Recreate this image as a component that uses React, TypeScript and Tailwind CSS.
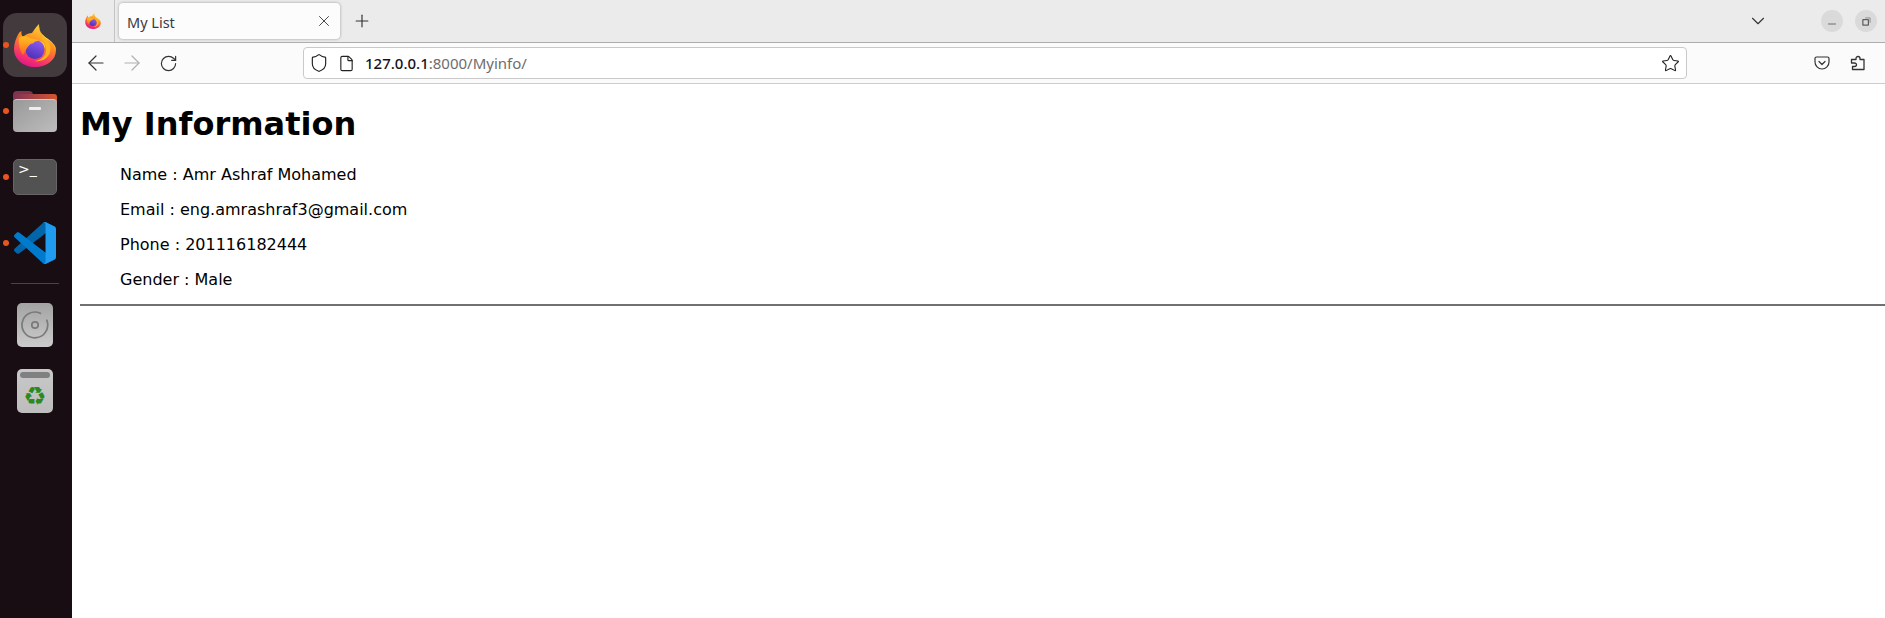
import React from 'react';
import { ArrowLeft, ArrowRight, ChevronDown, File, Minus, Plus, RotateCw, Shield, Star, X } from 'lucide-react';

function FirefoxLogo({ className, id }: { className: string; id: string }) {
  return (
    <svg viewBox="0 0 42 43" className={className}>
      <defs>
        <linearGradient id={`${id}-a`} x1="0.75" y1="0" x2="0.35" y2="1">
          <stop offset="0" stopColor="#ffe03d" />
          <stop offset="0.45" stopColor="#ff8a1f" />
          <stop offset="0.8" stopColor="#f5356b" />
          <stop offset="1" stopColor="#e31587" />
        </linearGradient>
        <linearGradient id={`${id}-b`} x1="0.7" y1="0" x2="0.3" y2="1">
          <stop offset="0" stopColor="#8f5cf0" />
          <stop offset="1" stopColor="#4a2fb5" />
        </linearGradient>
        <linearGradient id={`${id}-c`} x1="0.5" y1="0" x2="0.4" y2="1">
          <stop offset="0" stopColor="#ffc21f" />
          <stop offset="1" stopColor="#ff6a1f" />
        </linearGradient>
      </defs>
      <path
        d="M25 0C24 6 27 9 31 13C37 17 42 21 42 26C42 36 33 43 21 43C9 43 0 35 0 25C0 19 2 14 5 9C6 8 7 7 7.500 7C7 10 8 12 9 13C12 10 15 9 18 9C20 6 22 3 25 0Z"
        fill={`url(#${id}-a)`}
      />
      <path d="M25 0C24 6 27 9 31 13C37 17 42 21 42 26C41 21 37 17 32 15C29 12 25 8 25 0Z" fill="#ffe45c" />
      <path d="M27 12C34 14 38 21 36 28C34 35 27 38 21 37C28 36 33 31 32 24C31 18 28 15 24 13Z" fill="#ffb21f" />
      <circle cx="21" cy="25.500" r="9.500" fill={`url(#${id}-b)`} />
      <path
        d="M5 14C7 12 11 12 14 13C16 14 18 15 20 15C22 15 24 16 25 17C22 16.500 20 18 19 19.500C17 19 15 21 13 24C11 27 10 30 9 31C6 27 4 20 5 14Z"
        fill={`url(#${id}-c)`}
      />
      <path d="M25 17C29 17 32 21 31 25C30 20 28 18 25 17Z" fill="#ffd43b" />
    </svg>
  );
}

function VsCodeLogo() {
  return (
    <svg viewBox="0 0 100 100" className="w-[42px] h-[42px]">
      <path
        d="M96.4614 10.7962L75.8569 0.875542C73.4719 -0.272773 70.6217 0.211611 68.75 2.08333L1.29858 63.5832C-0.515693 65.2373 -0.513607 68.0937 1.30308 69.7452L6.81272 74.754C8.29793 76.1042 10.5347 76.2036 12.1338 74.9905L93.3609 13.3699C96.086 11.3026 100 13.2462 100 16.6667V16.4275C100 14.0265 98.6246 11.8378 96.4614 10.7962Z"
        fill="#0065a9"
      />
      <path
        d="M96.4614 89.2038L75.8569 99.1245C73.4719 100.273 70.6217 99.7884 68.75 97.9167L1.29858 36.4168C-0.515693 34.7627 -0.513607 31.9063 1.30308 30.2548L6.81272 25.246C8.29793 23.8958 10.5347 23.7964 12.1338 25.0095L93.3609 86.6301C96.086 88.6974 100 86.7538 100 83.3333V83.5725C100 85.9735 98.6246 88.1622 96.4614 89.2038Z"
        fill="#007acc"
      />
      <path
        d="M75.8578 99.1263C73.4721 100.274 70.6219 99.7885 68.75 97.9166C71.0564 100.223 75 98.5895 75 95.3278V4.67213C75 1.41039 71.0564 -0.223106 68.75 2.08329C70.6219 0.211402 73.4721 -0.273666 75.8578 0.873633L96.4587 10.7807C98.6234 11.8217 100 14.0112 100 16.4132V83.5871C100 85.9891 98.6234 88.1786 96.4586 89.2196L75.8578 99.1263Z"
        fill="#1f9cf0"
      />
    </svg>
  );
}

function DockItem({ running, active, children }: { running?: boolean; active?: boolean; children: React.ReactNode }) {
  return (
    <div className="relative h-[66px] w-full flex items-center justify-center">
      {running && <span className="absolute left-[3px] top-[30px] w-[6px] h-[6px] rounded-full bg-[#e95420]" />}
      <div className={`w-[64px] h-[64px] rounded-[14px] flex items-center justify-center ${active ? 'bg-[#433a3e]' : ''}`}>
        {children}
      </div>
    </div>
  );
}

function Dock() {
  return (
    <aside className="w-[72px] shrink-0 bg-[#170d13] flex flex-col items-center pt-[12px] pr-[2px]">
      <DockItem running active>
        <FirefoxLogo id="dock" className="w-[42px] h-[43px]" />
      </DockItem>
      <DockItem running>
        <div className="relative w-[44px] h-[41px]">
          <div className="absolute top-0 left-0 w-[20px] h-[8px] rounded-t-[4px] bg-[#7e3350]" />
          <div className="absolute top-[3px] left-0 right-0 h-[14px] rounded-t-[3px] bg-gradient-to-r from-[#7e3350] to-[#d5552a]" />
          <div className="absolute top-[8px] left-0 right-0 bottom-0 rounded-[4px] bg-gradient-to-br from-[#999999] to-[#bdbdbd] border-t border-[#cfcfcf]" />
          <div className="absolute top-[16px] left-[16px] w-[12px] h-[3px] rounded-[1px] bg-[#eeeeee]" />
        </div>
      </DockItem>
      <DockItem running>
        <div className="relative w-[44px] h-[36px] rounded-[5px] bg-[#525252] border border-[#666666]">
          <span className="absolute left-[4px] top-[1px] text-[14px] leading-[16px] text-white [font-family:'DejaVu_Sans',sans-serif]">&gt;_</span>
        </div>
      </DockItem>
      <DockItem running>
        <VsCodeLogo />
      </DockItem>
      <div className="w-[48px] h-px bg-[#4a4347] mt-[7px] mb-[19px]" />
      <div className="w-[36px] h-[44px] rounded-[5px] bg-gradient-to-b from-[#a3a3a3] to-[#cccccc] flex items-center justify-center">
        <svg viewBox="0 0 28 28" className="w-[30px] h-[30px]" fill="none" stroke="#7a7a7a">
          <path d="M19 3.100A12 12 0 1 0 25 9.500" strokeWidth="1.600" strokeLinecap="round" />
          <circle cx="14" cy="14" r="3" strokeWidth="1.600" />
        </svg>
      </div>
      <div className="w-[36px] h-[44px] mt-[22px] rounded-[5px] bg-gradient-to-b from-[#c8c8c8] to-[#bdbdbd] flex flex-col items-center pt-[3px]">
        <div className="w-[30px] h-[6px] rounded-[3px] bg-[#808080]" />
        <span className="mt-[5px] text-[26px] leading-[26px] font-bold text-[#2a8a1f] [font-family:'DejaVu_Sans',sans-serif]">♻</span>
      </div>
    </aside>
  );
}

function TabBar() {
  return (
    <div className="h-[43px] shrink-0 bg-[#ebebeb] border-b border-[#adadad] flex items-stretch [font-family:'Noto_Sans',sans-serif]">
      <div className="w-[43px] border-r border-[#c4c4c4] flex items-center justify-center">
        <FirefoxLogo id="tab" className="w-[16px] h-[16px]" />
      </div>
      <div className="ml-[4px] mt-[3px] w-[221px] h-[36px] rounded-[4px] bg-[#fcfcfc] shadow-[0_0_3px_rgba(0,0,0,0.35)] flex items-center justify-between pl-[8px] pr-[7px]">
        <span className="text-[14.500px] leading-[20px] mt-[1px] text-[#3a3a44]">My List</span>
        <X size={18} strokeWidth={1.3} className="text-[#444444]" />
      </div>
      <div className="ml-[5px] w-[34px] flex items-center justify-center">
        <Plus size={20} strokeWidth={1.4} className="text-[#333333]" />
      </div>
      <div className="flex-1" />
      <div className="flex items-center pr-[8px]">
        <ChevronDown size={22} strokeWidth={1.2} className="text-[#333333] mr-[52px]" />
        <div className="w-[22px] h-[22px] rounded-full bg-[#dadada] flex items-center justify-center">
          <Minus size={12} strokeWidth={1.3} className="text-[#333333] mt-[5px]" />
        </div>
        <div className="ml-[12px] w-[22px] h-[22px] rounded-full bg-[#dadada] flex items-center justify-center">
          <svg viewBox="0 0 10 10" className="w-[9px] h-[9px]" fill="none" stroke="#333333" strokeWidth="1">
            <rect x="1" y="3" width="6" height="6" />
            <path d="M3.500 1H9V6.500" stroke="#888888" />
          </svg>
        </div>
      </div>
    </div>
  );
}

function NavButton({ children }: { children: React.ReactNode }) {
  return <div className="w-[36px] h-[36px] flex items-center justify-center">{children}</div>;
}

function Toolbar() {
  return (
    <div className="h-[41px] shrink-0 bg-[#fbfbfb] border-b border-[#cccccc] flex items-center pl-[6px] pr-[9px] [font-family:'Noto_Sans',sans-serif]">
      <NavButton>
        <ArrowLeft size={24} strokeWidth={1.2} className="text-[#333333]" />
      </NavButton>
      <NavButton>
        <ArrowRight size={24} strokeWidth={1.2} className="text-[#b0b0b0]" />
      </NavButton>
      <NavButton>
        <RotateCw size={19} strokeWidth={1.5} className="text-[#333333]" />
      </NavButton>
      <div className="mx-[117px] flex-1 h-[32px] bg-white border border-[#c9c9c9] rounded-[4px] flex items-center pl-[5px] pr-[6px]">
        <Shield size={20} strokeWidth={1.4} className="text-[#222222]" />
        <File size={17} strokeWidth={1.6} className="ml-[9px] text-[#222222]" />
        <span className="ml-[10px] text-[15px] font-medium text-[#15141a]">127.0.0.1</span>
        <span className="text-[15px] text-[#6d6d6d]">:8000/Myinfo/</span>
        <div className="flex-1" />
        <Star size={19} strokeWidth={1.4} className="text-[#222222]" />
      </div>
      <NavButton>
        <svg viewBox="0 0 16 16" className="w-[16px] h-[16px]" fill="none" stroke="#333333" strokeWidth="1.200">
          <path d="M2.500 2H13.500C14.300 2 15 2.700 15 3.500V7A7 7 0 0 1 1 7V3.500C1 2.700 1.700 2 2.500 2Z" />
          <path d="M5 6.500L8 9.500L11 6.500" strokeLinecap="round" strokeLinejoin="round" />
        </svg>
      </NavButton>
      <NavButton>
        <svg viewBox="0 0 16 16" className="w-[16px] h-[16px]" fill="none" stroke="#333333" strokeWidth="1.300" strokeLinejoin="round">
          <path d="M8 1.500C9.300 1.500 10 2.400 10 3.500V4.500H14V14.500H2.500V11.500H4.500C5.600 11.500 6.500 10.800 6.500 9.700C6.500 8.600 5.600 8 4.500 8H1.500V4.500H6V3.500C6 2.400 6.700 1.500 8 1.500Z" />
        </svg>
      </NavButton>
    </div>
  );
}

const info = ['Name : Amr Ashraf Mohamed', 'Email : eng.amrashraf3@gmail.com', 'Phone : 201116182444', 'Gender : Male'];

export default function App() {
  return (
    <div className="h-[618px] w-[1885px] flex overflow-hidden bg-white">
      <Dock />
      <div className="flex-1 flex flex-col min-w-0">
        <TabBar />
        <Toolbar />
        <main className="flex-1 pl-[8px] pt-[22px] text-black [font-family:'DejaVu_Sans',sans-serif]">
          <h1 className="text-[32px] leading-[37px] font-bold">My Information</h1>
          <ul className="mt-[22px] pl-[40px] flex flex-col gap-[16px]">
            {info.map((line) => (
              <li key={line} className="text-[16px] leading-[19px]">
                {line}
              </li>
            ))}
          </ul>
          <hr className="mt-[15px] border-t-2 border-[#707070]" />
        </main>
      </div>
    </div>
  );
}
